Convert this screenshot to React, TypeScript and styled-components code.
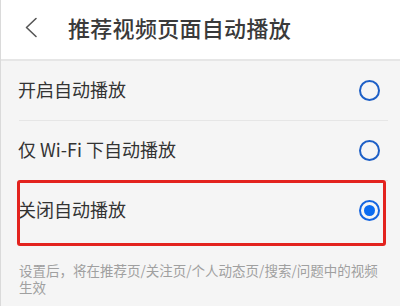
import styled, { createGlobalStyle } from "styled-components";

const GlobalStyle = createGlobalStyle`
  html, body {
    margin: 0;
    padding: 0;
    background: #f5f5f5;
  }
  * {
    box-sizing: border-box;
  }
`;

const options = [
  { label: "开启自动播放", checked: false },
  { label: "仅 Wi-Fi 下自动播放", checked: false },
  { label: "关闭自动播放", checked: true, marked: true },
];

export default function App() {
  return (
    <>
      <GlobalStyle />
      <Page>
        <Header>
          <BackButton>
            <svg width="14" height="21" viewBox="0 0 14 21" fill="none">
              <path
                d="M12 1.5L2.5 10.5L12 19.5"
                stroke="#555"
                strokeWidth="1.6"
                strokeLinecap="round"
                strokeLinejoin="round"
              />
            </svg>
          </BackButton>
          <Title>推荐视频页面自动播放</Title>
        </Header>
        <List>
          {options.map((option, index) => (
            <Row key={index} last={index === options.length - 1}>
              <Label>{option.label}</Label>
              <Radio checked={option.checked} />
              {option.marked && <Highlight />}
            </Row>
          ))}
        </List>
        <Note>
          设置后，将在推荐页/关注页/个人动态页/搜索/问题中的视频生效
        </Note>
      </Page>
    </>
  );
}

const Page = styled.div`
  width: 400px;
  height: 306px;
  overflow: hidden;
  background: #f5f5f5;
  border-left: 1px solid #dadada;
  font-family: "Noto Sans CJK SC", "Noto Sans", sans-serif;
`;

const Header = styled.header`
  height: 61px;
  background: #fff;
  border-bottom: 2px solid #e6e6e6;
  display: flex;
  align-items: center;
  padding-left: 23px;
  padding-bottom: 6px;
`;

const BackButton = styled.div`
  display: flex;
  align-items: center;
  width: 44px;
  margin-top: 2px;
`;

const Title = styled.h1`
  margin: 0;
  font-size: 22px;
  font-weight: 500;
  color: #3a3a3a;
  letter-spacing: 0.3px;
`;

const List = styled.div`
  display: flex;
  flex-direction: column;
`;

const Row = styled.div<{ last: boolean }>`
  position: relative;
  height: 60px;
  display: flex;
  align-items: center;
  justify-content: space-between;
  padding: 0 20px 0 17px;

  &::after {
    content: "";
    display: ${({ last }) => (last ? "none" : "block")};
    position: absolute;
    left: 18px;
    right: 12px;
    bottom: 0;
    height: 1px;
    background: #e6e6e6;
  }
`;

const Label = styled.span`
  font-size: 18px;
  color: #333;
  margin-bottom: 4px;
`;

const Radio = styled.span<{ checked: boolean }>`
  width: 21px;
  height: 21px;
  border-radius: 50%;
  border: 2px solid ${({ checked }) => (checked ? "#1565e0" : "#1d5fc6")};
  display: flex;
  align-items: center;
  justify-content: center;
  margin-bottom: 1px;

  &::before {
    content: "";
    display: ${({ checked }) => (checked ? "block" : "none")};
    width: 11px;
    height: 11px;
    border-radius: 50%;
    background: #0b6cf2;
  }
`;

const Highlight = styled.div`
  position: absolute;
  left: 16px;
  right: 14px;
  top: -1px;
  bottom: -5px;
  border: 3px solid #e3231e;
  border-radius: 3px;
  pointer-events: none;
`;

const Note = styled.p`
  margin: 0;
  padding: 21px 14px 0 18px;
  font-size: 13.5px;
  line-height: 17px;
  color: #a0a0a0;
`;
